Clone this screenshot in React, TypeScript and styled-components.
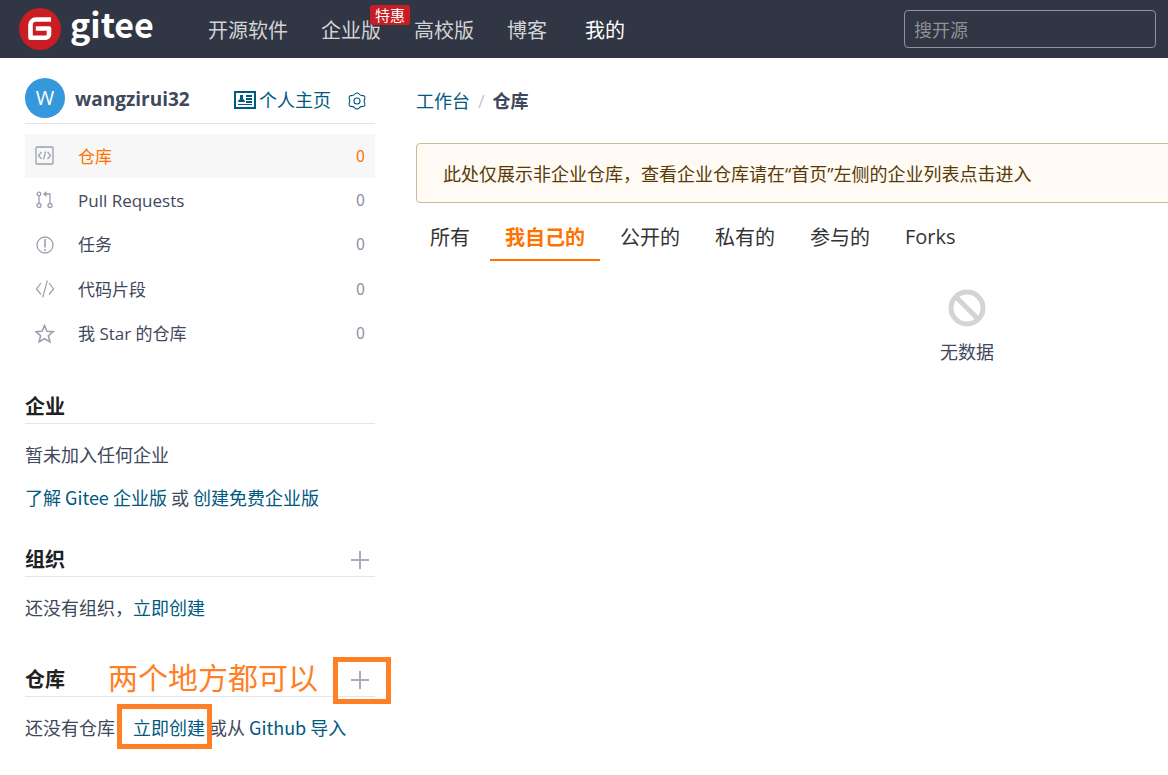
import React from "react";
import styled, { createGlobalStyle } from "styled-components";

const uiFont = `"Open Sans", "Noto Sans CJK SC", sans-serif`;
const narrowFont = `"Noto Sans CJK SC", "Open Sans", sans-serif`;

const GlobalStyle = createGlobalStyle`
  *, *::before, *::after { box-sizing: border-box; }
  body {
    margin: 0;
    background: #fff;
    color: #40485b;
    font-family: ${uiFont};
    font-size: 18px;
    line-height: 26px;
  }
  h1, h2, p, ul, ol { margin: 0; padding: 0; }
  ul, ol { list-style: none; }
  button, input { font-family: inherit; }
  a { text-decoration: none; }
  svg { display: block; flex: none; }
`;

const Page = styled.div`
  min-height: 100vh;
  overflow-x: clip;
`;

const TopBar = styled.header`
  display: flex;
  align-items: center;
  height: 58px;
  padding: 0 12px 0 19px;
  background: #303643;
`;

const Brand = styled.a`
  display: flex;
  align-items: center;
  gap: 9px;
  width: 189px;
  flex: none;
  color: #fff;
`;

const Wordmark = styled.span`
  font-family: ${narrowFont};
  font-size: 34px;
  font-weight: 700;
  line-height: 48px;
  padding-bottom: 10px;
`;

const NavList = styled.ul`
  display: flex;
  gap: 33px;
  margin-right: auto;
  padding-top: 4px;
`;

const NavItem = styled.li`
  position: relative;
  &:last-child { margin-left: 5px; }
`;

const NavLink = styled.a<{ $active?: boolean }>`
  display: block;
  font-size: 20px;
  line-height: 30px;
  white-space: nowrap;
  color: ${(p) => (p.$active ? "#fff" : "#d2d3d6")};
`;

const Badge = styled.span`
  position: absolute;
  top: -11px;
  right: -29px;
  padding: 0 5px;
  border-radius: 3px;
  background: #c71d23;
  color: #fff;
  font-size: 15px;
  line-height: 20px;
  white-space: nowrap;
`;

const SearchBox = styled.input`
  width: 252px;
  height: 38px;
  padding: 2px 9px 0;
  border: 1px solid #8c92a4;
  border-radius: 4px;
  background: transparent;
  color: #fff;
  font-size: 18px;
  outline: none;
  &::placeholder { color: #8f9196; opacity: 1; }
`;

const Body = styled.div`
  display: flex;
  gap: 41px;
  padding: 20px 25px 24px;
`;

const Sidebar = styled.aside`
  width: 350px;
  flex: none;
`;

const Profile = styled.div`
  display: flex;
  align-items: center;
  height: 46px;
  padding: 0 9px 5px 0;
  border-bottom: 1px solid #e3e5e8;
`;

const Avatar = styled.span`
  width: 40px;
  height: 40px;
  border-radius: 50%;
  background: #3498db;
  color: #fff;
  font-size: 20px;
  line-height: 40px;
  text-align: center;
`;

const UserName = styled.strong`
  margin: 0 auto 0 10px;
  padding-top: 2px;
  font-size: 19px;
  font-weight: 700;
`;

const TextLink = styled.a`
  color: #005980;
`;

const HomeLink = styled(TextLink)`
  display: flex;
  align-items: center;
  gap: 3px;
  margin-right: 17px;
  padding-top: 4px;
`;

const SettingsLink = styled(TextLink)`
  padding-top: 6px;
`;

const Menu = styled.ul`
  display: grid;
  grid-auto-rows: 1fr;
  height: 222px;
  margin: 10px 0 32px;
  font-size: 17px;
`;

const MenuLink = styled.a<{ $active?: boolean }>`
  display: flex;
  align-items: center;
  height: 44px;
  padding: 0 10px;
  background: ${(p) => (p.$active ? "#f7f7f7" : "transparent")};
  color: ${(p) => (p.$active ? "#fe7300" : "#40485b")};
  svg { color: #9aa0b1; margin-right: 23px; }
`;

const MenuLabel = styled.span`
  padding-top: 1px;
`;

const Count = styled.span<{ $active?: boolean }>`
  margin-left: auto;
  padding-bottom: 3px;
  font-family: ${narrowFont};
  font-size: 16px;
  color: ${(p) => (p.$active ? "#fe7300" : "#8c92a4")};
`;

const Section = styled.section<{ $tight?: boolean }>`
  position: relative;
  margin-bottom: ${(p) => (p.$tight ? 31 : 41)}px;
`;

const SectionHead = styled.div`
  display: flex;
  align-items: center;
  justify-content: space-between;
  height: 36px;
  padding-right: 6px;
  border-bottom: 1px solid #e3e6ea;
  margin-bottom: 17px;
`;

const SectionTitle = styled.h2`
  padding-top: 2px;
  font-size: 20px;
  line-height: 30px;
  font-weight: 700;
  color: #212121;
`;

const AddButton = styled.button`
  padding: 3px 0 0;
  border: 0;
  background: none;
  color: #aeacbc;
  cursor: pointer;
`;

const Line = styled.p`
  font-family: ${narrowFont};
  white-space: nowrap;
  & + & { margin-top: 17px; }
`;

const NoteText = styled.span`
  position: absolute;
  left: 83px;
  top: -3px;
  color: #ff7f27;
  font-size: 30px;
  line-height: 40px;
  white-space: nowrap;
`;

const NoteFrame = styled.span<{ $x: number; $y: number; $w: number; $h: number }>`
  position: absolute;
  left: ${(p) => p.$x}px;
  top: ${(p) => p.$y}px;
  width: ${(p) => p.$w}px;
  height: ${(p) => p.$h}px;
  border: 5px solid #ff7f27;
  pointer-events: none;
`;

const Main = styled.main`
  flex: 1 0 auto;
  min-width: 1102px;
`;

const Crumbs = styled.ol`
  display: flex;
  gap: 8px;
  height: 46px;
  align-items: center;
`;

const Divider = styled.span`
  margin-right: 8px;
  color: #c4c6cc;
`;

const Current = styled.strong`
  font-weight: 700;
`;

const Notice = styled.p`
  margin-top: 19px;
  padding: 17px 26px 15px;
  border: 1px solid #c9ba9b;
  border-radius: 4px;
  background: #fffaf3;
  color: #573a08;
`;

const Tabs = styled.div`
  display: flex;
  gap: 5px;
  margin: 10px 0 0 -1px;
`;

const Tab = styled.button<{ $active?: boolean }>`
  height: 48px;
  padding: 0 15px;
  border: 0;
  border-bottom: 2px solid ${(p) => (p.$active ? "#fe7300" : "transparent")};
  background: none;
  color: ${(p) => (p.$active ? "#fe7300" : "#333")};
  font-size: 20px;
  font-weight: ${(p) => (p.$active ? 700 : 400)};
  cursor: pointer;
`;

const Empty = styled.div`
  display: flex;
  flex-direction: column;
  align-items: center;
  gap: 12px;
  padding-top: 28px;
`;

const Logo = () => (
  <svg width="42" height="42" viewBox="0 0 42 42" aria-hidden="true">
    <circle cx="21" cy="21" r="21" fill="#c71d23" />
    <path
      d="M32 11.500H17a5.500 5.500 0 0 0-5.500 5.500v12.700H26.500a3.500 3.500 0 0 0 3.500-3.500V20.500H16.800"
      fill="none"
      stroke="#fff"
      strokeWidth="4.600"
      strokeLinejoin="round"
    />
  </svg>
);

const CardIcon = () => (
  <svg width="22" height="18" viewBox="0 0 22 18" aria-hidden="true">
    <rect x="1" y="1" width="20" height="16" fill="none" stroke="currentColor" strokeWidth="2" />
    <path d="M6 4h3v4H6zM4 11q0-2 2-3h3q2 1 2 3zM12 4h6v2h-6zM12 7h6v2h-6zM12 10h6v2h-6zM4 13h14v1H4z" fill="currentColor" />
  </svg>
);

const GearIcon = () => (
  <svg width="18" height="18" viewBox="0 0 18 18" fill="none" stroke="currentColor" strokeWidth="1.100" strokeLinejoin="round" aria-hidden="true">
    <path d="M7.500 1.500Q9 .5 10.500 1.500 12.500 4 15.500 3.500 17 4.300 17 6 15.500 9 17 12 17 13.700 15.500 14.500 12.500 14 10.500 16.500 9 17.500 7.500 16.500 5.500 14 2.500 14.500 1 13.700 1 12 2.500 9 1 6 1 4.300 2.500 3.500 5.500 4 7.500 1.500Z" />
    <circle cx="9" cy="9" r="3" />
  </svg>
);

const line = {
  width: 20,
  height: 20,
  viewBox: "0 0 20 20",
  fill: "none",
  stroke: "currentColor",
  strokeWidth: 1.3,
  "aria-hidden": true,
} as const;

const RepoIcon = () => (
  <svg {...line}>
    <rect x="1" y="1" width="17" height="17" rx="1" />
    <path d="M6.500 6 3.500 9.500l3 3.500M12.500 6l3 3.500-3 3.500M10.500 5.500l-2 8" strokeWidth="1.200" />
  </svg>
);
const PullIcon = () => (
  <svg {...line}>
    <circle cx="4" cy="4" r="1.800" />
    <circle cx="4" cy="15.500" r="2" />
    <circle cx="15" cy="15.500" r="2" />
    <path d="M4 6v7.500M15 13.500V4H9M11.500 1.800 9 4l2.500 2.200" />
  </svg>
);
const IssueIcon = () => (
  <svg {...line}>
    <circle cx="10" cy="10" r="8" />
    <path d="M10 4v8.500M10 14v2" strokeWidth="1.600" />
  </svg>
);
const SnippetIcon = () => (
  <svg {...line}>
    <path d="M6 4 1.500 10 6 15.500M14 4l4.500 6-4.500 5.500M12.300 1.500l-4.600 17" strokeWidth="1.200" />
  </svg>
);
const StarIcon = () => (
  <svg {...line}>
    <path d="m9.500 1.500 2.400 5.700 6.200.5-4.700 4 1.500 6.200-5.400-3.300-5.400 3.300 1.500-6.200-4.700-4 6.200-.5Z" strokeWidth="1.600" />
  </svg>
);
const PlusIcon = () => (
  <svg width="18" height="18" viewBox="0 0 18 18" aria-hidden="true">
    <path d="M9 0v18M0 9h18" stroke="currentColor" strokeWidth="2" />
  </svg>
);
const BanIcon = () => (
  <svg width="38" height="38" viewBox="0 0 38 38" fill="none" stroke="#d4d4d4" strokeWidth="5" aria-hidden="true">
    <circle cx="19" cy="19" r="16" />
    <path d="m7.700 7.700 22.600 22.600" />
  </svg>
);

const nav = [
  { label: "开源软件" },
  { label: "企业版", badge: "特惠" },
  { label: "高校版" },
  { label: "博客" },
  { label: "我的", active: true },
];

const menu = [
  { label: "仓库", Icon: RepoIcon, active: true },
  { label: "Pull Requests", Icon: PullIcon },
  { label: "任务", Icon: IssueIcon },
  { label: "代码片段", Icon: SnippetIcon },
  { label: "我 Star 的仓库", Icon: StarIcon },
];

const tabs = ["所有", "我自己的", "公开的", "私有的", "参与的", "Forks"];

export default function App() {
  const [tab, setTab] = React.useState("我自己的");
  return (
    <Page>
      <GlobalStyle />
      <TopBar>
        <Brand href="#">
          <Logo />
          <Wordmark>gitee</Wordmark>
        </Brand>
        <NavList>
          {nav.map((n) => (
            <NavItem key={n.label}>
              <NavLink href="#" $active={n.active}>{n.label}</NavLink>
              {n.badge && <Badge>{n.badge}</Badge>}
            </NavItem>
          ))}
        </NavList>
        <SearchBox type="search" aria-label="搜开源" placeholder="搜开源" />
      </TopBar>
      <Body>
        <Sidebar>
          <Profile>
            <Avatar>W</Avatar>
            <UserName>wangzirui32</UserName>
            <HomeLink href="#"><CardIcon />个人主页</HomeLink>
            <SettingsLink href="#" aria-label="设置"><GearIcon /></SettingsLink>
          </Profile>
          <Menu>
            {menu.map(({ label, Icon, active }) => (
              <li key={label}>
                <MenuLink href="#" $active={active}>
                  <Icon />
                  <MenuLabel>{label}</MenuLabel>
                  <Count $active={active}>0</Count>
                </MenuLink>
              </li>
            ))}
          </Menu>
          <Section $tight>
            <SectionHead><SectionTitle>企业</SectionTitle></SectionHead>
            <Line>暂未加入任何企业</Line>
            <Line>
              <TextLink href="#">了解 Gitee 企业版</TextLink> 或 <TextLink href="#">创建免费企业版</TextLink>
            </Line>
          </Section>
          <Section>
            <SectionHead>
              <SectionTitle>组织</SectionTitle>
              <AddButton type="button" aria-label="创建组织"><PlusIcon /></AddButton>
            </SectionHead>
            <Line>还没有组织，<TextLink href="#">立即创建</TextLink></Line>
          </Section>
          <Section>
            <SectionHead>
              <SectionTitle>仓库</SectionTitle>
              <AddButton type="button" aria-label="创建仓库"><PlusIcon /></AddButton>
            </SectionHead>
            <Line>
              还没有仓库，<TextLink href="#">立即创建</TextLink> 或从 <TextLink href="#">Github 导入</TextLink>
            </Line>
            <NoteText>两个地方都可以</NoteText>
            <NoteFrame $x={308} $y={-4} $w={58} $h={47} />
            <NoteFrame $x={92} $y={43} $w={95} $h={45} />
          </Section>
        </Sidebar>
        <Main>
          <Crumbs>
            <li><TextLink href="#">工作台</TextLink></li>
            <li><Divider>/</Divider><Current>仓库</Current></li>
          </Crumbs>
          <Notice>此处仅展示非企业仓库，查看企业仓库请在“首页”左侧的企业列表点击进入</Notice>
          <Tabs role="tablist">
            {tabs.map((t) => (
              <Tab key={t} type="button" role="tab" aria-selected={t === tab} $active={t === tab} onClick={() => setTab(t)}>
                {t}
              </Tab>
            ))}
          </Tabs>
          <Empty>
            <BanIcon />
            <p>无数据</p>
          </Empty>
        </Main>
      </Body>
    </Page>
  );
}
